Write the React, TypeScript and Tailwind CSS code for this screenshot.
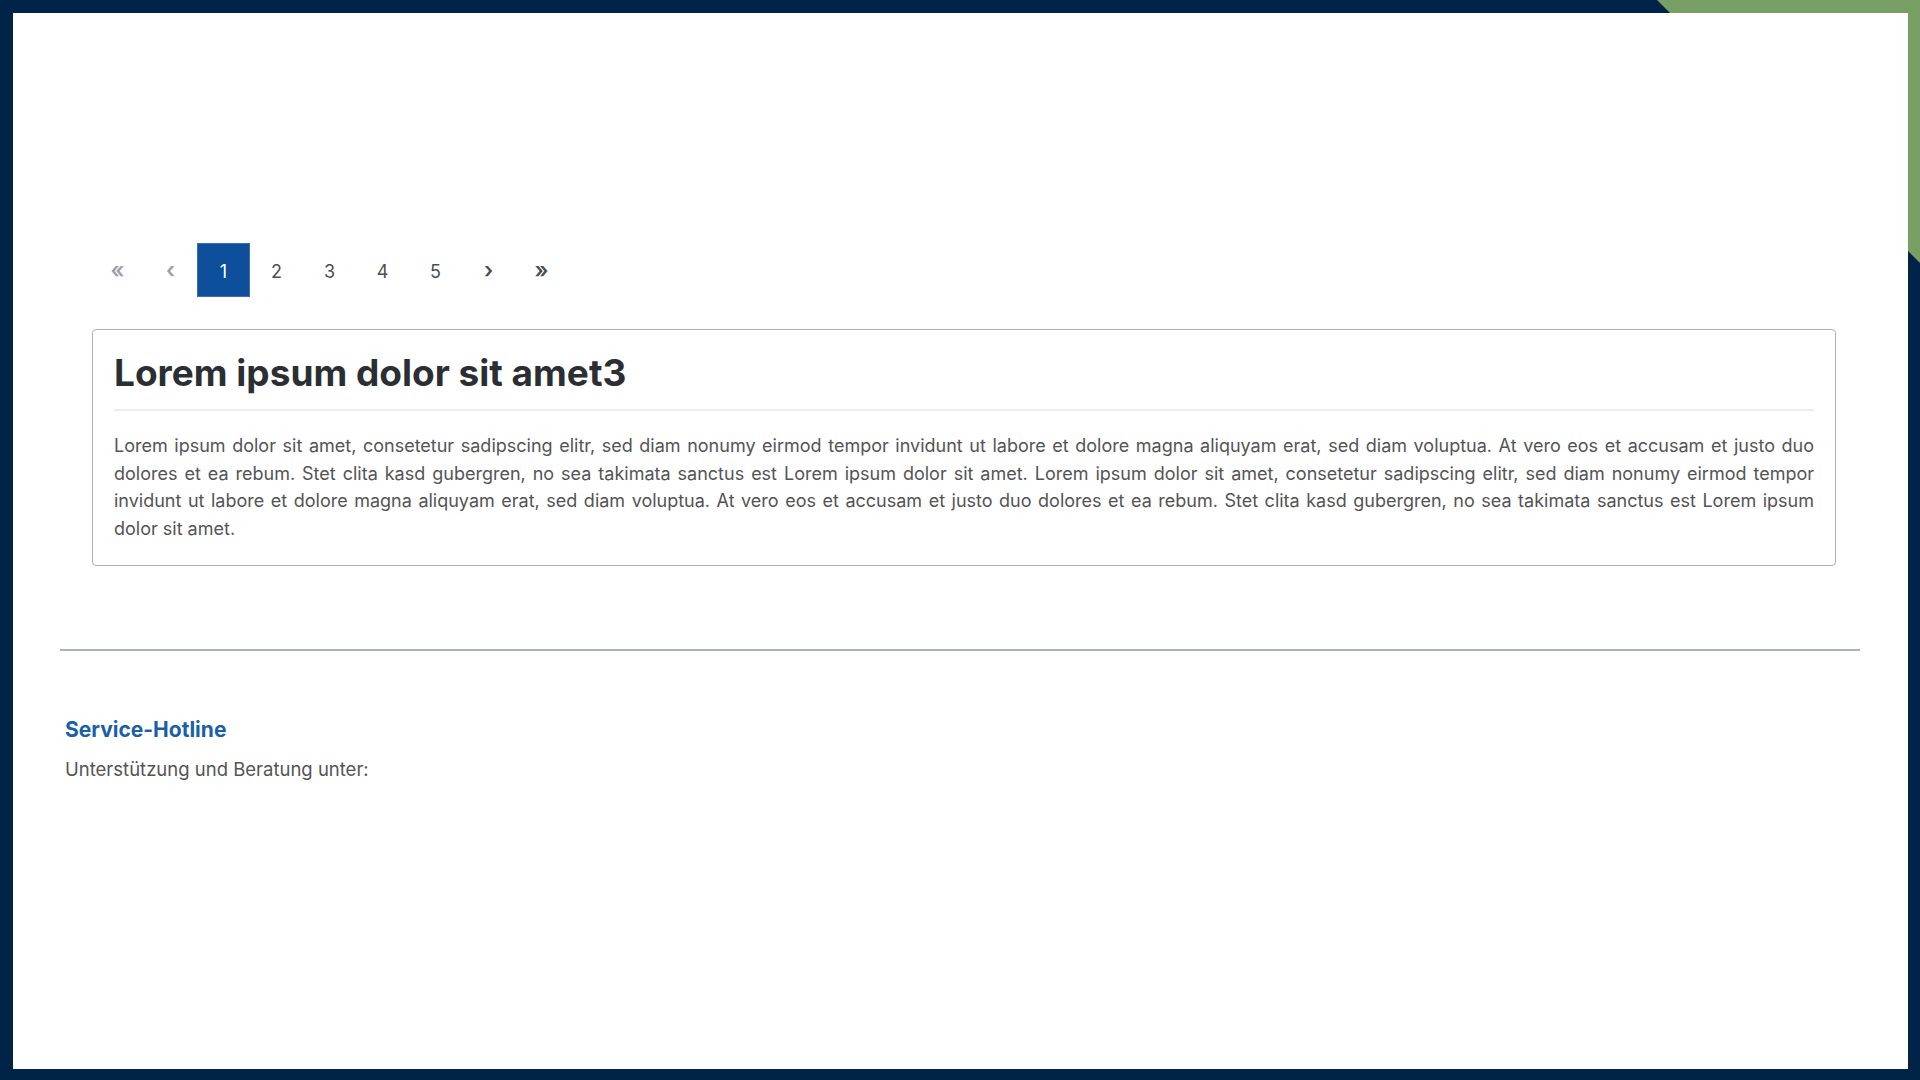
import React from "react";

const PAGES = ["1", "2", "3", "4", "5"];

function PageItem({ label, active, muted, arrow }: { label: string; active?: boolean; muted?: boolean; arrow?: boolean }) {
  return (
    <div
      className={`w-[53px] h-[54px] flex items-center justify-center ${
        arrow ? "text-[22px] font-semibold pt-[1px]" : "text-[18px] pt-[2px]"
      } ${
        active
          ? "bg-[#0d4f9b] text-white border border-[#3a70b0]"
          : muted
          ? "text-[#9aa0a6]"
          : "text-[#4a4f55]"
      }`}
    >
      {label}
    </div>
  );
}

export default function App() {
  return (
    <div
      className="relative min-h-screen h-screen bg-[#002347] pt-[13px] pl-[13px] pr-[12px] pb-[11px]"
      style={{ fontFamily: "Inter, 'Noto Sans', sans-serif" }}
    >
      {/* green corner */}
      <svg className="absolute top-0 right-0" width="263" height="263" viewBox="0 0 263 263">
        <polygon points="0,0 263,0 263,263" fill="#779f63" />
      </svg>

      <div className="relative h-full bg-white flex flex-col">
        {/* Pagination */}
        <div className="flex pt-[230px] pl-[78px]">
          <PageItem label="«" muted arrow />
          <PageItem label="‹" muted arrow />
          {PAGES.map((p, i) => (
            <PageItem key={p} label={p} active={i === 0} />
          ))}
          <PageItem label="›" arrow />
          <PageItem label="»" arrow />
        </div>

        {/* Card */}
        <div className="mt-[32px] ml-[79px] mr-[72px] border border-[#a9b0b8] rounded-[4px] px-[21px] pt-[21px] pb-[23px]">
          <h1 className="text-[37px] leading-[44px] font-bold text-[#2b2f33]">Lorem ipsum dolor sit amet3</h1>
          <div className="mt-[14px] h-[2px] bg-[#ececec]" />
          <p className="mt-[21px] text-[18px] leading-[27.6px] text-[#545454] text-justify">
            Lorem ipsum dolor sit amet, consetetur sadipscing elitr, sed diam nonumy eirmod tempor invidunt ut labore et dolore magna aliquyam erat, sed diam voluptua. At vero eos et accusam et justo duo dolores et ea rebum. Stet clita kasd gubergren, no sea takimata sanctus est Lorem ipsum dolor sit amet. Lorem ipsum dolor sit amet, consetetur sadipscing elitr, sed diam nonumy eirmod tempor invidunt ut labore et dolore magna aliquyam erat, sed diam voluptua. At vero eos et accusam et justo duo dolores et ea rebum. Stet clita kasd gubergren, no sea takimata sanctus est Lorem ipsum dolor sit amet.
          </p>
        </div>

        {/* Footer */}
        <div className="mt-[83px] ml-[47px] mr-[48px] h-[2px] bg-[#aab2bb]" />
        <div className="pl-[52px] pt-[66px]">
          <h2 className="text-[21px] leading-[26px] font-bold text-[#1a5fa8]">Service-Hotline</h2>
          <p className="mt-[14px] text-[18.5px] leading-[24px] text-[#545454]">Unterstützung und Beratung unter:</p>
        </div>
      </div>
    </div>
  );
}
